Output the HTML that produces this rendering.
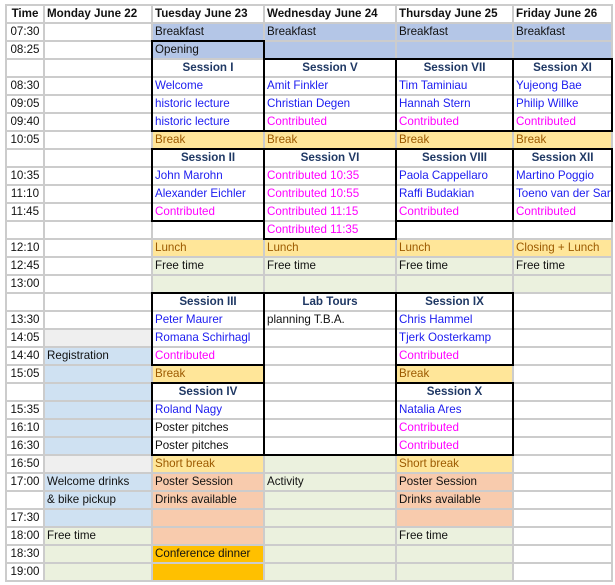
<!DOCTYPE html>
<html><head><meta charset="utf-8"><style>
body{margin:0;background:#fff;width:615px;height:585px;overflow:hidden;position:relative;font-family:"Liberation Sans",Arial,sans-serif;font-size:11.6px;}
table{position:absolute;left:5px;top:4px;border-collapse:separate;border-spacing:2px;background:#cccccc;table-layout:fixed;}
td{height:16px;line-height:16px;padding:0 0 0 2px;white-space:nowrap;overflow:hidden;background:#fff;color:#111;}
td:first-child{text-align:center;padding:0;}
.h{font-weight:bold;}
.bk{background:#b4c6e7}
.rg{background:#cfe1f2}
.y{background:#ffe699;color:#9c5a00}
.g{background:#ebf1de}
.p{background:#f8cbad}
.o{background:#ffc000}
.gr{background:#efefef}
.s{text-align:center;font-weight:bold;color:#1f3864;padding:0}
.b{color:#1c1cf0}
.m{color:#ff00ff}
.box{position:absolute;border:2px solid #000;box-sizing:border-box;}
</style></head><body>
<table>
<colgroup><col style="width:36px"><col style="width:106px"><col style="width:110px"><col style="width:130px"><col style="width:115px"><col style="width:97px"></colgroup>
<tr><td class="h">Time</td><td class="h">Monday June 22</td><td class="h">Tuesday June 23</td><td class="h">Wednesday June 24</td><td class="h">Thursday June 25</td><td class="h">Friday June 26</td></tr>
<tr><td>07:30</td><td></td><td class="bk">Breakfast</td><td class="bk">Breakfast</td><td class="bk">Breakfast</td><td class="bk">Breakfast</td></tr>
<tr><td>08:25</td><td></td><td class="bk">Opening</td><td class="bk"></td><td class="bk"></td><td class="bk"></td></tr>
<tr><td></td><td></td><td class="s">Session I</td><td class="s">Session V</td><td class="s">Session VII</td><td class="s">Session XI</td></tr>
<tr><td>08:30</td><td></td><td class="b">Welcome</td><td class="b">Amit Finkler</td><td class="b">Tim Taminiau</td><td class="b">Yujeong Bae</td></tr>
<tr><td>09:05</td><td></td><td class="b">historic lecture</td><td class="b">Christian Degen</td><td class="b">Hannah Stern</td><td class="b">Philip Willke</td></tr>
<tr><td>09:40</td><td></td><td class="b">historic lecture</td><td class="m">Contributed</td><td class="m">Contributed</td><td class="m">Contributed</td></tr>
<tr><td>10:05</td><td></td><td class="y">Break</td><td class="y">Break</td><td class="y">Break</td><td class="y">Break</td></tr>
<tr><td></td><td></td><td class="s">Session II</td><td class="s">Session VI</td><td class="s">Session VIII</td><td class="s">Session XII</td></tr>
<tr><td>10:35</td><td></td><td class="b">John Marohn</td><td class="m">Contributed 10:35</td><td class="b">Paola Cappellaro</td><td class="b">Martino Poggio</td></tr>
<tr><td>11:10</td><td></td><td class="b">Alexander Eichler</td><td class="m">Contributed 10:55</td><td class="b">Raffi Budakian</td><td class="b">Toeno van der Sar</td></tr>
<tr><td>11:45</td><td></td><td class="m">Contributed</td><td class="m">Contributed 11:15</td><td class="m">Contributed</td><td class="m">Contributed</td></tr>
<tr><td></td><td></td><td></td><td class="m">Contributed 11:35</td><td></td><td></td></tr>
<tr><td>12:10</td><td></td><td class="y">Lunch</td><td class="y">Lunch</td><td class="y">Lunch</td><td class="y">Closing + Lunch</td></tr>
<tr><td>12:45</td><td></td><td class="g">Free time</td><td class="g">Free time</td><td class="g">Free time</td><td class="g">Free time</td></tr>
<tr><td>13:00</td><td></td><td class="g"></td><td class="g"></td><td class="g"></td><td class="g"></td></tr>
<tr><td></td><td></td><td class="s">Session III</td><td class="s">Lab Tours</td><td class="s">Session IX</td><td></td></tr>
<tr><td>13:30</td><td></td><td class="b">Peter Maurer</td><td>planning T.B.A.</td><td class="b">Chris Hammel</td><td></td></tr>
<tr><td>14:05</td><td class="gr"></td><td class="b">Romana Schirhagl</td><td></td><td class="b">Tjerk Oosterkamp</td><td></td></tr>
<tr><td>14:40</td><td class="rg">Registration</td><td class="m">Contributed</td><td></td><td class="m">Contributed</td><td></td></tr>
<tr><td>15:05</td><td class="rg"></td><td class="y">Break</td><td></td><td class="y">Break</td><td></td></tr>
<tr><td></td><td class="rg"></td><td class="s">Session IV</td><td></td><td class="s">Session X</td><td></td></tr>
<tr><td>15:35</td><td class="rg"></td><td class="b">Roland Nagy</td><td></td><td class="b">Natalia Ares</td><td></td></tr>
<tr><td>16:10</td><td class="rg"></td><td>Poster pitches</td><td></td><td class="m">Contributed</td><td></td></tr>
<tr><td>16:30</td><td class="rg"></td><td>Poster pitches</td><td></td><td class="m">Contributed</td><td></td></tr>
<tr><td>16:50</td><td class="gr"></td><td class="y">Short break</td><td class="g"></td><td class="y">Short break</td><td></td></tr>
<tr><td>17:00</td><td class="rg">Welcome drinks</td><td class="p">Poster Session</td><td class="g">Activity</td><td class="p">Poster Session</td><td></td></tr>
<tr><td></td><td class="rg">&amp; bike pickup</td><td class="p">Drinks available</td><td class="g"></td><td class="p">Drinks available</td><td></td></tr>
<tr><td>17:30</td><td class="rg"></td><td class="p"></td><td class="g"></td><td class="p"></td><td></td></tr>
<tr><td>18:00</td><td class="g">Free time</td><td class="p"></td><td class="g"></td><td class="g">Free time</td><td></td></tr>
<tr><td>18:30</td><td class="g"></td><td class="o">Conference dinner</td><td class="g"></td><td class="g"></td><td></td></tr>
<tr><td>19:00</td><td class="g"></td><td class="o"></td><td class="g"></td><td class="g"></td><td></td></tr>
</table>
<div class="box" style="left:151px;top:40px;width:114px;height:92px"></div>
<div class="box" style="left:263px;top:58px;width:134px;height:74px"></div>
<div class="box" style="left:395px;top:58px;width:119px;height:74px"></div>
<div class="box" style="left:512px;top:58px;width:101px;height:74px"></div>
<div class="box" style="left:151px;top:148px;width:114px;height:74px"></div>
<div class="box" style="left:263px;top:148px;width:134px;height:92px"></div>
<div class="box" style="left:395px;top:148px;width:119px;height:74px"></div>
<div class="box" style="left:512px;top:148px;width:101px;height:74px"></div>
<div class="box" style="left:151px;top:292px;width:114px;height:74px"></div>
<div class="box" style="left:263px;top:292px;width:134px;height:164px"></div>
<div class="box" style="left:395px;top:292px;width:119px;height:74px"></div>
<div class="box" style="left:151px;top:382px;width:114px;height:74px"></div>
<div class="box" style="left:395px;top:382px;width:119px;height:74px"></div>
</body></html>
